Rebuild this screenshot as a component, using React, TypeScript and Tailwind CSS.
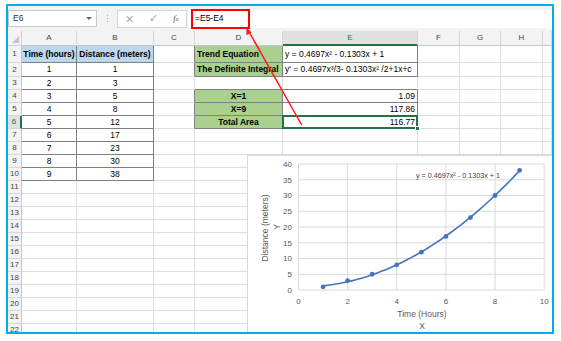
import React from "react";

type Cell = { t?: React.ReactNode; b?: boolean; bg?: string; al?: "l" | "c" | "r" };

const COLS = ["A", "B", "C", "D", "E", "F", "G", "H", ""];
const WIDTHS = ["w-[55px]", "w-[77px]", "w-[41px]", "w-[88px]", "w-[135px]", "w-[42px]", "w-[41px]", "w-[42px]", "flex-1"];
const HEIGHTS: Record<number, string> = { 1: "h-[17px]", 2: "h-[14px]" };

const BLUE = "bg-[#bdd7ee]";
const GREEN = "bg-[#a9d08e]";

const data: Record<number, Cell[]> = {
    1: [
        { t: "Time (hours)", b: true, bg: BLUE, al: "c" },
        { t: "Distance (meters)", b: true, bg: BLUE, al: "c" },
        {},
        { t: "Trend Equation", b: true, bg: GREEN, al: "l" },
        { t: "y = 0.4697x² - 0.1303x + 1", al: "l" },
    ],
    2: [
        { t: "1", al: "c" },
        { t: "1", al: "c" },
        {},
        { t: "The Definite Integral", b: true, bg: GREEN, al: "l" },
        { t: "y' = 0.4697x³/3- 0.1303x² /2+1x+c", al: "l" },
    ],
    4: [{}, {}, {}, { t: "X=1", b: true, bg: GREEN, al: "c" }, { t: "1.09", al: "r" }],
    5: [{}, {}, {}, { t: "X=9", b: true, bg: GREEN, al: "c" }, { t: "117.86", al: "r" }],
    6: [{}, {}, {}, { t: "Total Area", b: true, bg: GREEN, al: "c" }, { t: "116.77", al: "r" }],
};

const timeCol = ["1", "2", "3", "4", "5", "6", "7", "8", "9"];
const distCol = ["1", "3", "5", "8", "12", "17", "23", "30", "38"];
for (let r = 2; r <= 10; r++) {
    const row = data[r] ?? [];
    row[0] = { t: timeCol[r - 2], al: "c" };
    row[1] = { t: distCol[r - 2], al: "c" };
    data[r] = row;
}

const blocks = [
    { r0: 1, r1: 10, c0: 0, c1: 1 },
    { r0: 1, r1: 2, c0: 3, c1: 4 },
    { r0: 4, r1: 6, c0: 3, c1: 4 },
];

const inBlock = (r: number, c: number) =>
    blocks.some((b) => r >= b.r0 && r <= b.r1 && c >= b.c0 && c <= b.c1);

const points = [
    [1, 1], [2, 3], [3, 5], [4, 8], [5, 12], [6, 17], [7, 23], [8, 30], [9, 38],
];
const px = (v: number) => 51.5 + 24.57 * v;
const py = (v: number) => 135 - 3.15 * v;

export default function App() {
    const rowNums = Array.from({ length: 22 }, (_, i) => i + 1);

    return (
        <div className="w-[561px] h-[341px] bg-white pl-[6px] pt-[4px] font-['Liberation_Sans',Arial,sans-serif]">
            <div className="relative w-[548px] h-[330px] border-2 border-[#00aeef] overflow-hidden bg-white flex flex-col">
                <FormulaBar />

                {/* column headers */}
                <div className="flex h-[15px] shrink-0 bg-[#f3f3f3] text-[8px] text-[#444]">
                    <div className="w-[14px] relative border-r border-b border-[#d0d0d0]">
                        <div className="absolute right-[2px] bottom-[2px] w-0 h-0 border-l-[7px] border-l-transparent border-b-[7px] border-b-[#c4c4c4]" />
                    </div>
                    {COLS.map((c, i) => (
                        <div
                            key={i}
                            className={`${WIDTHS[i]} flex items-center justify-center border-r border-[#d7d7d7] ${
                                c == "E"
                                    ? "bg-[#e1e1e1] text-[#217346] border-b-2 border-b-[#217346]"
                                    : "border-b border-b-[#c6c6c6]"
                            }`}
                        >
                            {c}
                        </div>
                    ))}
                </div>

                {rowNums.map((r) => (
                    <div key={r} className={`flex shrink-0 ${HEIGHTS[r] ?? "h-[13px]"}`}>
                        <div
                            className={`w-[14px] flex items-center justify-center text-[8px] border-b border-b-[#d7d7d7] ${
                                r == 6
                                    ? "bg-[#e1e1e1] text-[#217346] border-r-2 border-r-[#217346]"
                                    : "bg-[#f3f3f3] text-[#444] border-r border-r-[#c6c6c6]"
                            }`}
                        >
                            {r}
                        </div>
                        {COLS.map((_, c) => {
                            const cell = data[r]?.[c] ?? {};
                            const darkR = inBlock(r, c) || inBlock(r, c + 1);
                            const darkB = inBlock(r, c) || inBlock(r + 1, c);
                            return (
                                <div
                                    key={c}
                                    className={`${WIDTHS[c]} relative flex items-center px-[2px] text-[8.5px] text-black whitespace-nowrap overflow-visible border-r border-b ${
                                        darkR ? "border-r-[#808080]" : "border-r-[#dedede]"
                                    } ${darkB ? "border-b-[#808080]" : "border-b-[#dedede]"} ${cell.bg ?? ""} ${
                                        cell.b ? "font-bold" : ""
                                    } ${
                                        cell.al == "c"
                                            ? "justify-center"
                                            : cell.al == "r"
                                              ? "justify-end"
                                              : "justify-start"
                                    }`}
                                >
                                    {cell.t}
                                    {r == 6 && c == 4 && (
                                        <div className="absolute -left-px -top-px -right-px -bottom-px border-2 border-[#217346] z-10">
                                            <div className="absolute -right-[4px] -bottom-[4px] w-[5px] h-[5px] bg-[#217346] border border-white" />
                                        </div>
                                    )}
                                </div>
                            );
                        })}
                    </div>
                ))}

                <Chart />

                {/* red annotation arrow */}
                <svg
                    className="absolute left-0 top-0 pointer-events-none z-20"
                    width="544"
                    height="326"
                >
                    <line x1="240" y1="24" x2="293.7" y2="119" stroke="#ff1a1a" strokeWidth="1.5" />
                    <polygon points="238.5,21.5 243.6,26.6 238.4,29.2" fill="#ff1a1a" />
                </svg>
            </div>
        </div>
    );
}

function FormulaBar() {
    return (
        <div className="h-[25px] shrink-0 bg-[#f3f3f3] flex items-center">
            <div className="w-[89px] h-[17px] bg-white border border-[#c8c8c8] flex items-center justify-between pl-[4px] pr-[4px]">
                <span className="text-[8.5px] text-[#333]">E6</span>
                <span className="w-0 h-0 border-l-[3px] border-r-[3px] border-t-[3px] border-l-transparent border-r-transparent border-t-[#666]" />
            </div>
            <div className="w-[20px] flex flex-col items-center gap-[2px]">
                <span className="w-[1px] h-[1px] bg-[#b0b0b0]" />
                <span className="w-[1px] h-[1px] bg-[#b0b0b0]" />
                <span className="w-[1px] h-[1px] bg-[#b0b0b0]" />
            </div>
            <div className="w-[70px] h-[18px] bg-white border border-[#d6d6d6] flex items-center justify-around text-[#a8a8a8]">
                <span className="text-[14px] leading-none font-light">×</span>
                <span className="text-[11px] leading-none">✓</span>
                <span className="text-[9px] italic font-['Liberation_Serif',serif] text-[#555]">
                    f<span className="text-[6px]">x</span>
                </span>
            </div>
            <div className="ml-[1px] flex-1 h-[18px] bg-white flex items-center pl-[3px]">
                <div className="w-[59px] h-[20px] border-2 border-[#ff0000] flex items-center pl-[2px] text-[8.5px] text-black">
                    =E5-E4
                </div>
            </div>
        </div>
    );
}

function Chart() {
    const curve = [];
    for (let x = 1; x <= 9.001; x += 0.2) {
        const y = 0.4697 * x * x - 0.1303 * x + 1;
        curve.push(`${px(x).toFixed(1)},${py(y).toFixed(1)}`);
    }

    return (
        <div className="absolute left-[239px] top-[149px] w-[320px] h-[190px] bg-white z-10">
            <svg width="320" height="190" className="font-['Liberation_Sans',Arial,sans-serif]">
                <rect x="0.5" y="0.5" width="319" height="189" fill="white" stroke="#d9d9d9" />
                {[0, 5, 10, 15, 20, 25, 30, 35, 40].map((v) => (
                    <g key={v}>
                        <line x1={px(0)} x2={px(10)} y1={py(v)} y2={py(v)} stroke="#d9d9d9" strokeWidth="1" />
                        <text x="45" y={py(v) + 2.8} fontSize="8" fill="#595959" textAnchor="end">
                            {v}
                        </text>
                    </g>
                ))}
                {[0, 2, 4, 6, 8, 10].map((v) => (
                    <g key={v}>
                        <line x1={px(v)} x2={px(v)} y1={py(0)} y2={py(40)} stroke="#d9d9d9" strokeWidth="1" />
                        <text x={px(v)} y="148.5" fontSize="8" fill="#595959" textAnchor="middle">
                            {v}
                        </text>
                    </g>
                ))}
                <polyline points={curve.join(" ")} fill="none" stroke="#4472c4" strokeWidth="1.6" />
                {points.map(([x, y]) => (
                    <circle key={x} cx={px(x)} cy={py(y)} r="2.4" fill="#4472c4" />
                ))}
                <text x="169" y="22.5" fontSize="7.2" fill="#404040">
                    y = 0.4697x² - 0.1303x + 1
                </text>
                <text x="175" y="162" fontSize="8.5" fill="#595959" textAnchor="middle">
                    Time (Hours)
                </text>
                <text x="175" y="174" fontSize="8.5" fill="#595959" textAnchor="middle">
                    X
                </text>
                <text
                    x="18"
                    y="73"
                    fontSize="8.5"
                    fill="#595959"
                    textAnchor="middle"
                    dominantBaseline="central"
                    transform="rotate(-90 18 73)"
                >
                    Distance (meters)
                </text>
                <text
                    x="29.5"
                    y="72"
                    fontSize="8.5"
                    fill="#595959"
                    textAnchor="middle"
                    dominantBaseline="central"
                    transform="rotate(-90 29.5 72)"
                >
                    Y
                </text>
            </svg>
        </div>
    );
}
